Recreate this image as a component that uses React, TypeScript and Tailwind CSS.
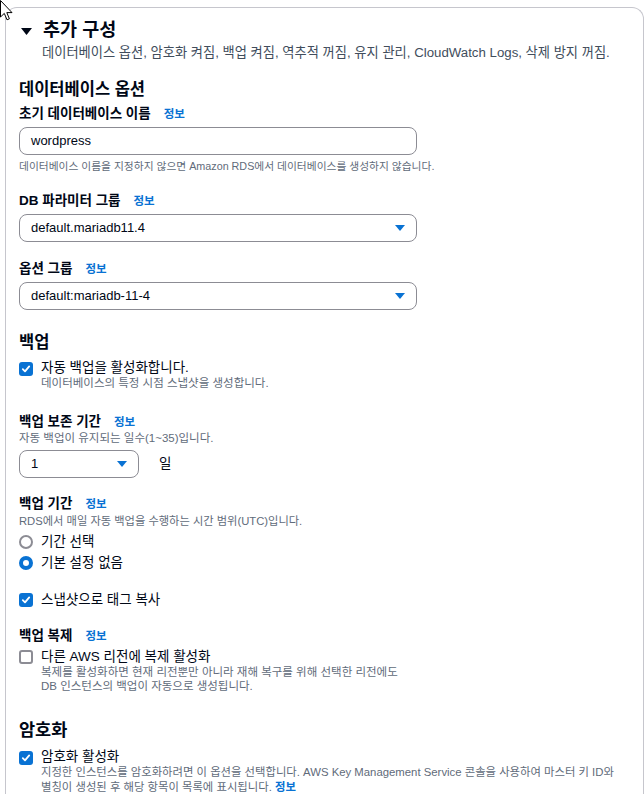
import React from 'react'

function Info() {
  return <span className="ml-[13px] text-[11.5px] font-bold text-[#0972d3]">정보</span>
}

function Check({ checked }: { checked: boolean }) {
  if (checked) {
    return (
      <span className="flex h-[14px] w-[14px] shrink-0 items-center justify-center rounded-[3px] bg-[#0972d3]">
        <svg width="10" height="10" viewBox="0 0 10 10">
          <path d="M1.8 5.2 L4 7.4 L8.2 2.4" fill="none" stroke="white" strokeWidth="1.8" strokeLinecap="round" strokeLinejoin="round" />
        </svg>
      </span>
    )
  }
  return <span className="block h-[14px] w-[14px] shrink-0 rounded-[3px] border-2 border-[#8c8c94] bg-white" />
}

function Radio({ checked }: { checked: boolean }) {
  return checked ? (
    <span className="block h-[14px] w-[14px] shrink-0 rounded-full border-[4px] border-[#0972d3] bg-white" />
  ) : (
    <span className="block h-[14px] w-[14px] shrink-0 rounded-full border-2 border-[#8c8c94] bg-white" />
  )
}

function Caret() {
  return (
    <svg width="10" height="6" viewBox="0 0 10 6">
      <path d="M0 0 H10 L5 6 Z" fill="#0972d3" />
    </svg>
  )
}

function Select({ value, small }: { value: string; small?: boolean }) {
  return (
    <div
      className={
        (small ? 'w-[120px] ' : 'w-[398px] ') +
        'flex h-[28px] items-center justify-between rounded-lg border border-[#8c8c94] bg-white pl-[11px] pr-[11px] text-[13px] leading-[16px] text-[#000716]'
      }
    >
      <span>{value}</span>
      <Caret />
    </div>
  )
}

export default function App() {
  return (
    <div className="relative min-h-[794px] overflow-hidden bg-white pt-[7px] font-['Liberation_Sans','Noto_Sans_CJK_KR',sans-serif] text-[#000716]">
      {/* mouse cursor */}
      <svg className="absolute left-0 top-0" width="13" height="21" viewBox="0 0 13 21">
        <path d="M0.5 0.5 V17 L4.3 13.4 L7 19.8 L9.4 18.8 L6.8 12.6 H12 Z" fill="white" stroke="black" strokeWidth="1" strokeLinejoin="round" />
      </svg>

      <div className="ml-[5px] w-[639px] rounded-t-[12px] border-l border-r border-t border-[#c6c6cd] pb-6 pl-[13px] pt-[10px]">
        {/* header */}
        <div className="flex h-[24px] items-center">
          <svg className="ml-[2px] mt-[2px]" width="11" height="7" viewBox="0 0 11 7">
            <path d="M0 0 H11 L5.5 7 Z" fill="#000716" />
          </svg>
          <span className="ml-[11px] text-[18.5px] font-bold leading-[24px]">추가 구성</span>
        </div>
        <div className="mt-[3px] pl-[23px] text-[13.25px] leading-[16px] text-[#414d5c]">
          데이터베이스 옵션, 암호화 켜짐, 백업 켜짐, 역추적 꺼짐, 유지 관리, CloudWatch Logs, 삭제 방지 꺼짐.
        </div>

        {/* database options */}
        <div className="mt-[17px] text-[16.5px] font-bold leading-[22px]">데이터베이스 옵션</div>
        <div className="mt-[5px] text-[13.5px] font-bold leading-[18px]">
          초기 데이터베이스 이름
          <Info />
        </div>
        <div className="mt-[4px] flex h-[28px] w-[398px] items-center rounded-lg border border-[#8c8c94] pl-[11px] text-[13px] leading-[16px]">
          wordpress
        </div>
        <div className="mt-[3px] text-[10.75px] leading-[16px] text-[#5f6b7a]">
          데이터베이스 이름을 지정하지 않으면 Amazon RDS에서 데이터베이스를 생성하지 않습니다.
        </div>

        <div className="mt-[18px] text-[13.5px] font-bold leading-[18px]">
          DB 파라미터 그룹
          <Info />
        </div>
        <div className="mt-[4px]">
          <Select value="default.mariadb11.4" />
        </div>

        <div className="mt-[18px] text-[13.5px] font-bold leading-[18px]">
          옵션 그룹
          <Info />
        </div>
        <div className="mt-[4px]">
          <Select value="default:mariadb-11-4" />
        </div>

        {/* backup */}
        <div className="mt-[21px] text-[16.5px] font-bold leading-[22px]">백업</div>
        <div className="mt-[7px] flex gap-[8px]">
          <div className="pt-[2px]">
            <Check checked />
          </div>
          <div>
            <div className="text-[13.5px] leading-[16px]">자동 백업을 활성화합니다.</div>
            <div className="text-[11.5px] leading-[14px] text-[#5f6b7a]">데이터베이스의 특정 시점 스냅샷을 생성합니다.</div>
          </div>
        </div>

        <div className="mt-[23px] text-[13.5px] font-bold leading-[18px]">
          백업 보존 기간
          <Info />
        </div>
        <div className="text-[11.5px] leading-[14px] text-[#5f6b7a]">자동 백업이 유지되는 일수(1~35)입니다.</div>
        <div className="mt-[5px] flex items-center gap-[20px]">
          <Select value="1" small />
          <span className="text-[13.5px] leading-[16px]">일</span>
        </div>

        <div className="mt-[17px] text-[13.5px] font-bold leading-[18px]">
          백업 기간
          <Info />
        </div>
        <div className="mt-[1px] text-[11.25px] leading-[14px] text-[#5f6b7a]">
          RDS에서 매일 자동 백업을 수행하는 시간 범위(UTC)입니다.
        </div>
        <div className="mt-[5px] flex h-[18px] items-center gap-[8px]">
          <Radio checked={false} />
          <span className="text-[13.5px] leading-[18px]">기간 선택</span>
        </div>
        <div className="mt-[3px] flex h-[18px] items-center gap-[8px]">
          <Radio checked />
          <span className="text-[13.5px] leading-[18px]">기본 설정 없음</span>
        </div>

        <div className="mt-[19px] flex h-[18px] items-center gap-[8px]">
          <Check checked />
          <span className="text-[13.5px] leading-[18px]">스냅샷으로 태그 복사</span>
        </div>

        <div className="mt-[18px] text-[13.5px] font-bold leading-[18px]">
          백업 복제
          <Info />
        </div>
        <div className="mt-[4px] flex gap-[8px]">
          <div className="pt-[1px]">
            <Check checked={false} />
          </div>
          <div>
            <div className="text-[13.5px] leading-[16px]">다른 AWS 리전에 복제 활성화</div>
            <div className="text-[11.5px] leading-[14px] text-[#5f6b7a]">
              복제를 활성화하면 현재 리전뿐만 아니라 재해 복구를 위해 선택한 리전에도
              <br />
              DB 인스턴스의 백업이 자동으로 생성됩니다.
            </div>
          </div>
        </div>

        {/* encryption */}
        <div className="mt-[27px] text-[17.5px] font-bold leading-[20px]">암호화</div>
        <div className="mt-[10px] flex gap-[8px]">
          <div className="pt-[1px]">
            <Check checked />
          </div>
          <div>
            <div className="text-[13.5px] leading-[14px]">암호화 활성화</div>
            <div className="mt-[1px] text-[11.35px] leading-[15px] text-[#5f6b7a]">
              지정한 인스턴스를 암호화하려면 이 옵션을 선택합니다. AWS Key Management Service 콘솔을 사용하여 마스터 키 ID와
              <br />
              별칭이 생성된 후 해당 항목이 목록에 표시됩니다. <span className="font-bold text-[#0972d3]">정보</span>
            </div>
          </div>
        </div>
      </div>
    </div>
  )
}
